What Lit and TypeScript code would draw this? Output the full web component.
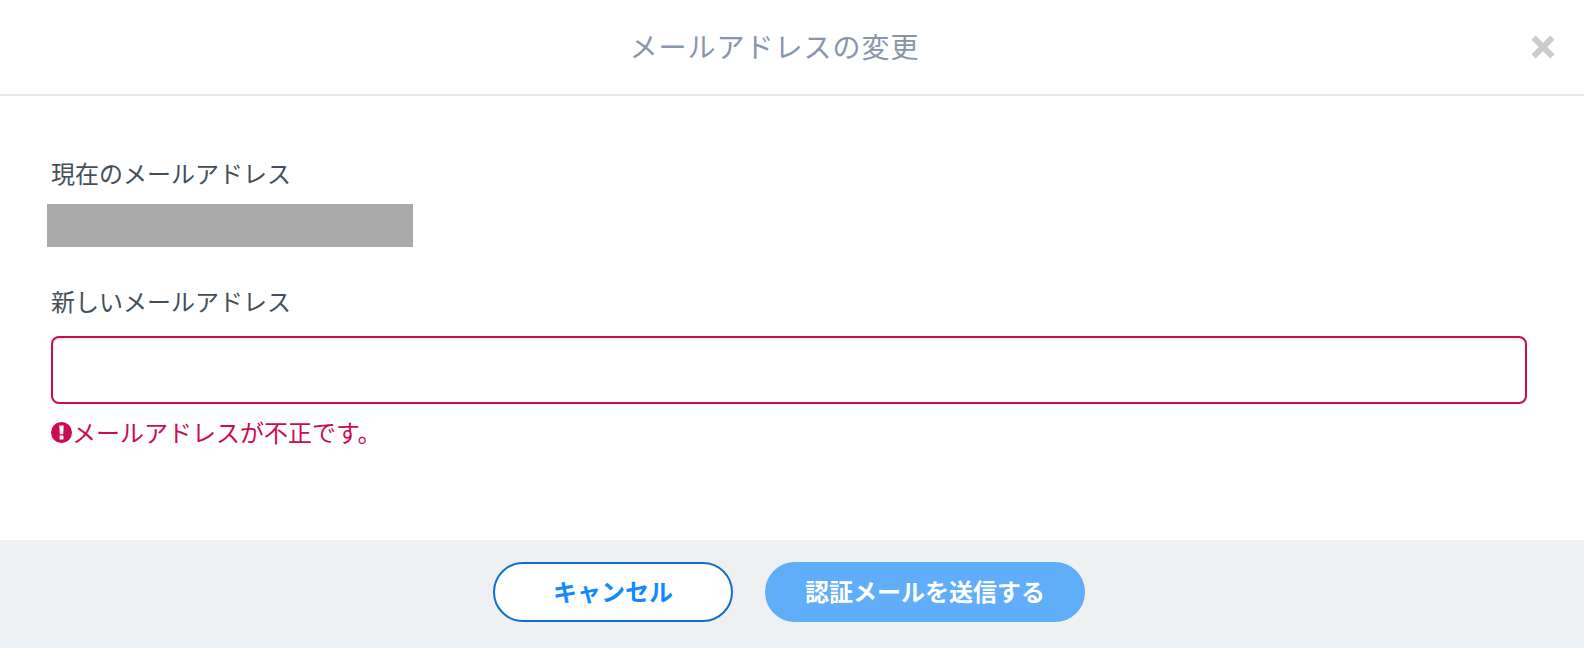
import { LitElement, html, css } from "lit";
import { customElement } from "lit/decorators.js";

@customElement("app-root")
export class AppRoot extends LitElement {
  static styles = css`
    :host {
      display: block;
      background: #fff;
      color: #444f59;
      font-family: "Noto Sans CJK JP", sans-serif;
      font-size: 24px;
      line-height: 36px;
    }
    .dialog {
      display: flex;
      flex-direction: column;
      min-height: 100vh;
    }
    .header {
      display: flex;
      align-items: center;
      padding: 26px 29px 26px 18px;
      border-bottom: 2px solid #e7e9ed;
    }
    .title {
      flex: 1;
      margin: 0;
      padding-bottom: 2px;
      font-size: 28px;
      line-height: 40px;
      font-weight: 400;
      text-align: center;
      letter-spacing: 1px;
      color: #8896ab;
    }
    .close {
      display: flex;
      padding: 0;
      border: 0;
      background: none;
      color: #ccc;
      cursor: pointer;
    }
    .body {
      flex: 1;
      display: flex;
      flex-direction: column;
      padding: 59px 57px 48px 51px;
    }
    .field {
      display: flex;
      flex-direction: column;
    }
    .field + .field {
      margin-top: 36px;
    }
    .masked {
      width: 366px;
      max-width: 100%;
      height: 43px;
      margin: 13px 0 0 -4px;
      background: #aaa;
    }
    .input {
      box-sizing: border-box;
      width: 100%;
      height: 68px;
      margin-top: 17px;
      padding: 12px 24px;
      border: 2px solid #cb0c52;
      border-radius: 8px;
      box-shadow: inset 0 2px 2px rgba(0, 0, 0, 0.08);
      background: #fff;
      color: inherit;
      font: inherit;
      outline: none;
    }
    .error {
      display: flex;
      align-items: center;
      margin: 10px 0 0;
      color: #cb0c52;
    }
    .footer {
      display: flex;
      justify-content: center;
      gap: 32px;
      padding: 22px 6px 26px 0;
      background: #eff0f2;
    }
    .button {
      box-sizing: border-box;
      min-width: 240px;
      height: 60px;
      padding: 0 38px 2px;
      border: 2px solid #0f6fcd;
      border-radius: 30px;
      background: #fff;
      color: #118aff;
      font: inherit;
      font-weight: 700;
      cursor: pointer;
    }
    .primary {
      min-width: 320px;
      border-color: #60adfa;
      background: #60adfa;
      color: #fff;
    }
  `;

  render() {
    return html`
      <form class="dialog" novalidate @submit=${(e: Event) => e.preventDefault()}>
        <header class="header">
          <h1 class="title">メールアドレスの変更</h1>
          <button class="close" type="button" aria-label="閉じる">
            <svg width="24" height="24" viewBox="0 0 24 24" aria-hidden="true">
              <path d="M2.6 2.6L21.4 21.4M21.4 2.6L2.6 21.4" fill="none" stroke="currentColor" stroke-width="6" />
            </svg>
          </button>
        </header>
        <div class="body">
          <div class="field">
            <span class="label">現在のメールアドレス</span>
            <div class="masked"></div>
          </div>
          <div class="field">
            <label class="label" for="email">新しいメールアドレス</label>
            <input class="input" id="email" type="email" aria-invalid="true" aria-describedby="email-error" />
            <p class="error" id="email-error">
              <svg width="21" height="21" viewBox="0 0 21 21" aria-hidden="true">
                <circle cx="10.5" cy="10.5" r="10.5" fill="currentColor" />
                <path d="M8.3 3.5h4.4l-.5 8.7H8.8zM8.6 13.6h3.8v3.8H8.6z" fill="#fff" />
              </svg>
              <span>メールアドレスが不正です。</span>
            </p>
          </div>
        </div>
        <footer class="footer">
          <button class="button" type="button">キャンセル</button>
          <button class="button primary" type="submit">認証メールを送信する</button>
        </footer>
      </form>
    `;
  }
}
